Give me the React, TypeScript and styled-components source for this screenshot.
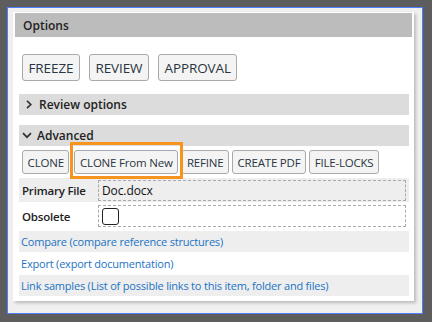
import React, { FC } from "react";
import styled, { createGlobalStyle, css } from "styled-components";

const GlobalStyle = createGlobalStyle`
  html, body {
    margin: 0;
    padding: 0;
    background: #5d5d5d;
    font-family: "Open Sans", "Noto Sans", sans-serif;
  }
`;

const Frame = styled.div`
  margin: 7px 0 0 7px;
  border: 1px solid #4f7dff;
  background: #efefef;
  padding: 4px 8px 0 5px;
  box-sizing: content-box;
  width: 401px;
  height: 301px;
`;

const Card = styled.div`
  background: #fff;
  height: 289px;
  box-shadow: 2px 2px 3px rgba(0, 0, 0, 0.22);
  padding-top: 1px;
  box-sizing: border-box;
`;

const Header = styled.div`
  margin: 0 2px;
  height: 24px;
  background: #bcbcbc;
  display: flex;
  align-items: center;
  padding-left: 8px;
  font-size: 12px;
  font-weight: 600;
  color: #222;
`;

const Body = styled.div`
  padding: 0 5px 0 6px;
  display: flex;
  flex-direction: column;
`;

const MainActions = styled.div`
  display: flex;
  gap: 9px;
  padding: 17px 0 0 3px;
  margin-bottom: 13px;
`;

const Button = styled.button<{ size?: "large" | "small" }>`
  font-family: inherit;
  background: #f4f4f4;
  border: 1px solid #a9a9a9;
  border-radius: 3px;
  color: #2a3542;
  cursor: pointer;
  white-space: nowrap;
  ${({ size }) =>
    size === "small"
      ? css`
          height: 24px;
          font-size: 11.5px;
          letter-spacing: -0.2px;
          padding: 0 4.6px;
        `
      : css`
          height: 27px;
          font-size: 13.5px;
          letter-spacing: -0.1px;
          padding: 0 5.5px;
        `}
`;

const Highlight = styled.span`
  position: relative;
  display: flex;
  margin-left: 2px;

  &::after {
    content: "";
    position: absolute;
    top: -8px;
    left: -4px;
    right: -5px;
    bottom: -5px;
    border: 3px solid #f7941d;
    pointer-events: none;
  }
`;

const SectionBar = styled.div<{ open?: boolean }>`
  height: 21px;
  background: #dcdcdc;
  display: flex;
  align-items: center;
  gap: ${({ open }) => (open ? "5px" : "7px")};
  padding-left: ${({ open }) => (open ? "3px" : "7px")};
  font-size: 12px;
  font-weight: 600;
  color: #222;
  margin-bottom: ${({ open }) => (open ? "4px" : "10px")};
`;

const Chevron: FC<{ open?: boolean }> = ({ open }) =>
  open ? (
    <svg width="10" height="7" viewBox="0 0 10 7">
      <path d="M1 1.2 L5 5.2 L9 1.2" fill="none" stroke="#333" strokeWidth="1.7" />
    </svg>
  ) : (
    <svg width="6" height="9" viewBox="0 0 6 9">
      <path d="M1 0.8 L4.8 4.5 L1 8.2" fill="none" stroke="#333" strokeWidth="1.7" />
    </svg>
  );

const SubActions = styled.div`
  display: flex;
  align-items: center;
  gap: 3px;
  padding-left: 3px;
  margin-bottom: 4px;
`;

const Field = styled.div<{ shaded?: boolean }>`
  display: flex;
  align-items: center;
  background: ${({ shaded }) => (shaded ? "#eeeeee" : "#fff")};
  padding: ${({ shaded }) => (shaded ? "2px 3px 1px" : "3px 3px 2px")};
`;

const FieldLabel = styled.div`
  width: 76px;
  font-size: 11.5px;
  font-weight: 600;
  letter-spacing: -0.2px;
  color: #222;
`;

const FieldValue = styled.div<{ tall?: boolean }>`
  flex: 1;
  height: ${({ tall }) => (tall ? "20px" : "19px")};
  border: 1px dashed #aaa;
  display: flex;
  align-items: center;
  padding-left: 3px;
  font-size: 12px;
  letter-spacing: -0.1px;
  color: #111;
`;

const Checkbox = styled.span`
  width: 15px;
  height: 15px;
  border: 1px solid #222;
  border-radius: 3px;
  background: #fff;
`;

const Links = styled.div`
  margin-top: 2px;
  display: flex;
  flex-direction: column;
`;

const LinkRow = styled.a<{ shaded?: boolean }>`
  display: flex;
  align-items: center;
  height: ${({ shaded }) => (shaded ? "21px" : "23px")};
  padding-left: 2px;
  background: ${({ shaded }) => (shaded ? "#eeeeee" : "#fff")};
  color: #1a73c4;
  font-size: 11px;
  letter-spacing: -0.2px;
  text-decoration: none;
`;

const App: FC = () => (
  <>
    <GlobalStyle />
    <Frame>
      <Card>
        <Header>Options</Header>
        <Body>
          <MainActions>
            <Button>FREEZE</Button>
            <Button>REVIEW</Button>
            <Button>APPROVAL</Button>
          </MainActions>
          <SectionBar>
            <Chevron />
            Review options
          </SectionBar>
          <SectionBar open>
            <Chevron open />
            Advanced
          </SectionBar>
          <SubActions>
            <Button size="small">CLONE</Button>
            <Highlight>
              <Button size="small">CLONE From New</Button>
            </Highlight>
            <Button size="small">REFINE</Button>
            <Button size="small">CREATE PDF</Button>
            <Button size="small">FILE-LOCKS</Button>
          </SubActions>
          <Field shaded>
            <FieldLabel>Primary File</FieldLabel>
            <FieldValue>Doc.docx</FieldValue>
          </Field>
          <Field>
            <FieldLabel>Obsolete</FieldLabel>
            <FieldValue tall>
              <Checkbox />
            </FieldValue>
          </Field>
          <Links>
            <LinkRow shaded href="#">
              Compare (compare reference structures)
            </LinkRow>
            <LinkRow href="#">Export (export documentation)</LinkRow>
            <LinkRow shaded href="#">
              Link samples (List of possible links to this item, folder and files)
            </LinkRow>
          </Links>
        </Body>
      </Card>
    </Frame>
  </>
);

export default App;
